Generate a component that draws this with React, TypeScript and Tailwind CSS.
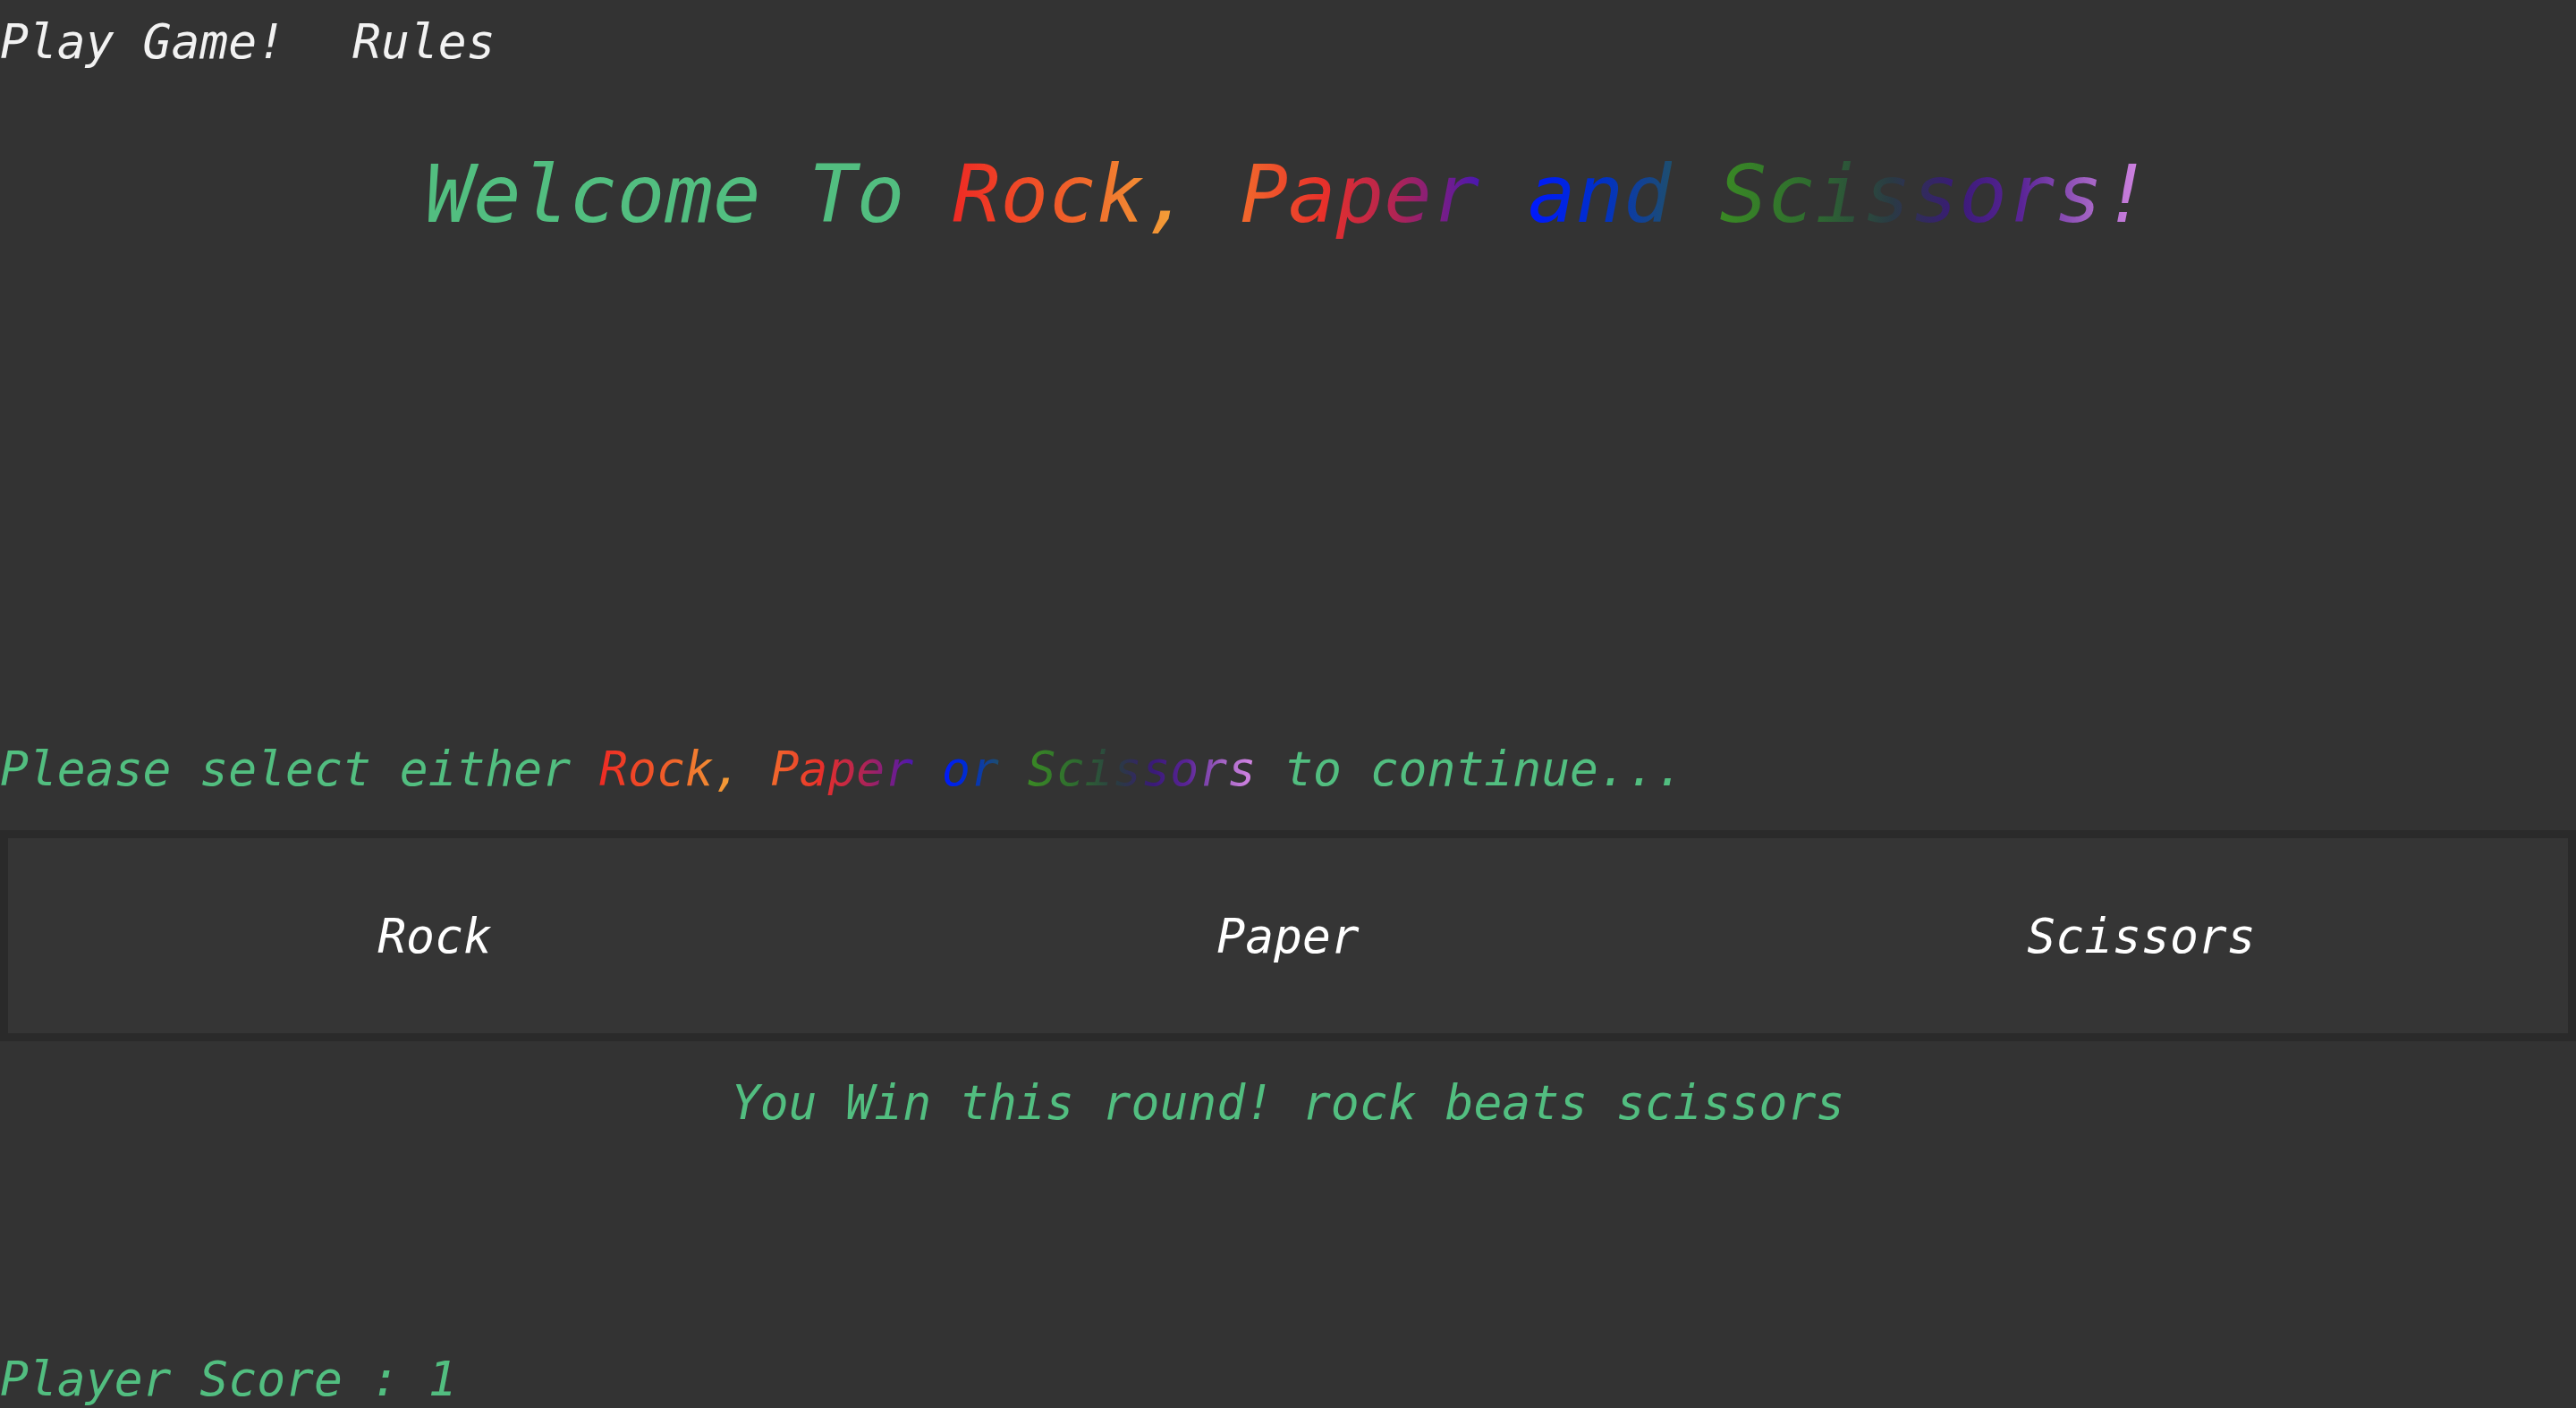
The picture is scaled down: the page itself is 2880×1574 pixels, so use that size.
import React from 'react';

const rock = 'bg-[linear-gradient(to_right,#ee2a24,#f0622a_50%,#f4aa3a)] bg-clip-text text-transparent';
const paper = 'bg-[linear-gradient(to_right,#f26a2c,#e8302a_35%,#b02454_65%,#4a18b0)] bg-clip-text text-transparent';
const and = 'bg-[linear-gradient(to_right,#0018ff,#0030c8_50%,#1e4e6e)] bg-clip-text text-transparent';
const scissors = 'bg-[linear-gradient(to_right,#3a8a24,#2e6a30_22%,#2a3a44_40%,#3a1a78_55%,#5a2496_70%,#a464c4_86%,#d98ae8)] bg-clip-text text-transparent';

function Nav() {
  return (
    <nav className="flex gap-[75px] pt-[20px] text-[53px] leading-[53px] text-[#f2f2f2]">
      <a className="cursor-pointer">Play Game!</a>
      <a className="cursor-pointer">Rules</a>
    </nav>
  );
}

function Choice({ label }: { label: string }) {
  return (
    <button className="flex items-center justify-center text-[53px] leading-[53px] italic text-white">
      {label}
    </button>
  );
}

export default function App() {
  return (
    <div className="min-h-screen bg-[#333333] font-['DejaVu_Sans_Mono',monospace] italic text-[#52be80]">
      <Nav />
      <h1 className="mt-[100px] text-center text-[89px] leading-[89px] font-normal">
        Welcome To <span className={rock}>Rock,</span> <span className={paper}>Paper</span>{' '}
        <span className={and}>and</span> <span className={scissors}>Scissors!</span>
      </h1>

      <p className="mt-[571px] text-[53px] leading-[53px]">
        Please select either <span className={rock}>Rock,</span> <span className={paper}>Paper</span>{' '}
        <span className={and}>or</span> <span className={scissors}>Scissors</span> to continue...
      </p>

      <div className="mt-[42px] border-[9px] border-[#2a2a2a] bg-[#353535] grid grid-cols-3 h-[236px]">
        <Choice label="Rock" />
        <Choice label="Paper" />
        <Choice label="Scissors" />
      </div>

      <p className="mt-[42px] text-center text-[53px] leading-[53px]">
        You Win this round! rock beats scissors
      </p>

      <p className="mt-[256px] text-[53px] leading-[53px]">Player Score : 1</p>
    </div>
  );
}
